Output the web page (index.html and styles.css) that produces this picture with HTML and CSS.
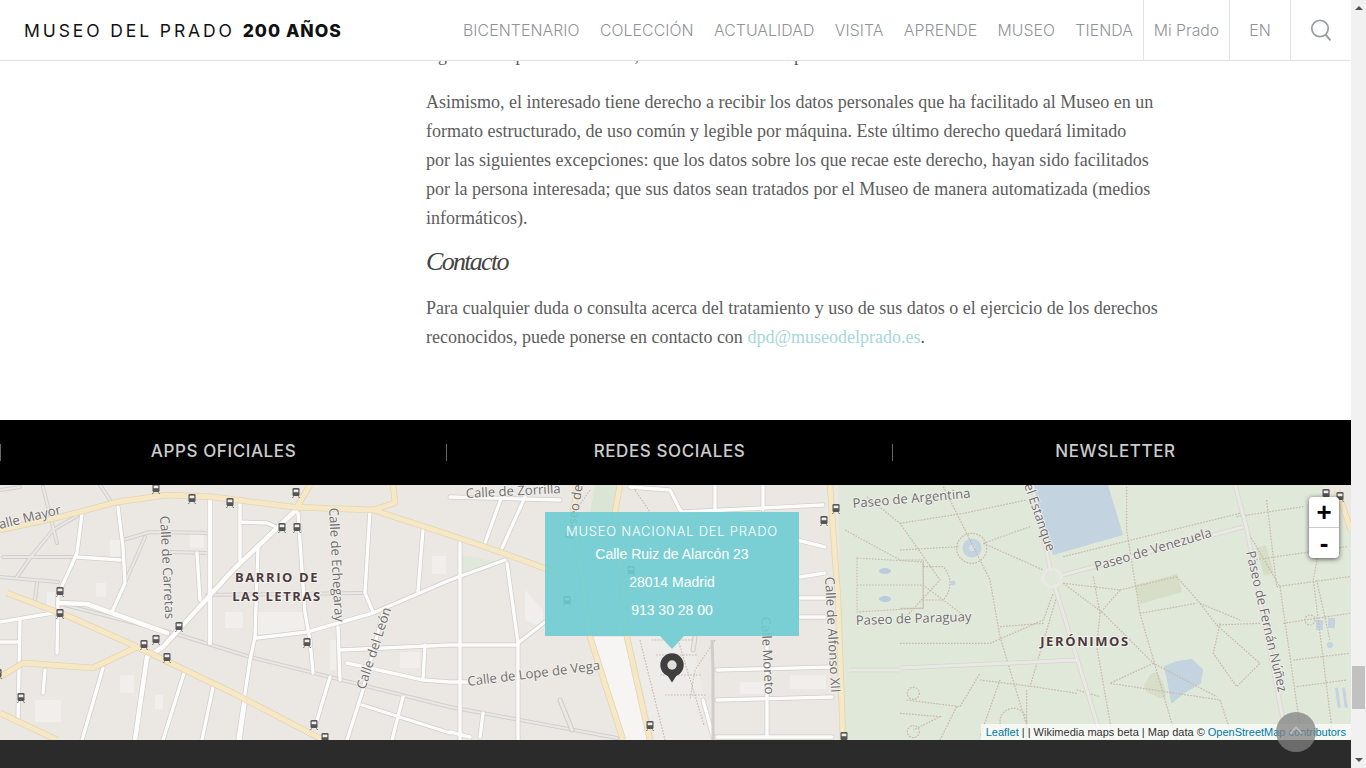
FILE: index.html
```html
<!DOCTYPE html>
<html lang="es">
<head>
    <meta charset="UTF-8">
    <meta name="viewport" content="width=device-width, initial-scale=1.0">
    <title>Museo del Prado - Privacidad</title>
    <link rel="stylesheet" href="styles.css">
</head>
<body>
    <div class="page">
        <header class="site-header">
            <a class="logo">MUSEO DEL PRADO <b>200 AÑOS</b></a>
            <nav class="main-nav">
                <a>BICENTENARIO</a>
                <a>COLECCIÓN</a>
                <a>ACTUALIDAD</a>
                <a>VISITA</a>
                <a>APRENDE</a>
                <a>MUSEO</a>
                <a>TIENDA</a>
            </nav>
            <a class="header-cell cell-user">Mi Prado</a>
            <a class="header-cell cell-lang">EN</a>
            <a class="header-cell cell-search">
                <svg width="22" height="22" viewBox="0 0 22 22" fill="none" stroke="#9a9ea3">
                    <circle cx="10" cy="9.5" r="8.2" stroke-width="1.7"/>
                    <path d="M15.5 15.5l5 5.8" stroke-width="2"/>
                </svg>
            </a>
        </header>

        <main class="legal">
            <p>signos de la persona del caso, dentro de la duda de personas interesadas.</p>
            <p>Asimismo, el interesado tiene derecho a recibir los datos personales que ha facilitado al Museo en un<br>
            formato estructurado, de uso común y legible por máquina. Este último derecho quedará limitado<br>
            por las siguientes excepciones: que los datos sobre los que recae este derecho, hayan sido facilitados<br>
            por la persona interesada; que sus datos sean tratados por el Museo de manera automatizada (medios<br>
            informáticos).</p>
            <h2>Contacto</h2>
            <p>Para cualquier duda o consulta acerca del tratamiento y uso de sus datos o el ejercicio de los derechos<br>
            reconocidos, puede ponerse en contacto con <a>dpd@museodelprado.es</a>.</p>
        </main>

        <section class="footer-tabs">
            <a>APPS OFICIALES</a>
            <a>REDES SOCIALES</a>
            <a>NEWSLETTER</a>
        </section>

        <section class="map">
            <svg class="map-tiles" width="1351" height="255" viewBox="0 485 1351 255">
                <defs>
                    <g id="tram">
                        <rect x="-3.5" y="-5" width="7" height="8" rx="1.2" fill="#555"/>
                        <rect x="-2.3" y="-3.4" width="4.6" height="2.6" fill="#eee"/>
                        <path d="M-2.5 3.5l-1 1.4M2.5 3.5l1 1.4" fill="none" stroke="#555"/>
                    </g>
                    <g id="lanes" fill="none" stroke-linejoin="round" stroke-linecap="round">
                        <path d="M43 487L57 543M3 557H77M17 577L30 558L53 530L82 513M0 577L58 582M37 583L35 600"/>
                        <path d="M123 540L150 532L210 533M145 537L113 610M170 552L207 553M207 595L363 593"/>
                        <path d="M57 603L173 633L250 657L450 707L617 738"/>
                        <path d="M0 490L20 487M100 485L110 500"/>
                    </g>
                    <g id="streets" fill="none" stroke-linejoin="round" stroke-linecap="round">
                        <path d="M82 513L77 553L58 595L57 653M118 507L123 547L125 583L112 612M77 557L120 560"/>
                        <path d="M240 503V560M240 522L267 523L283 530"/>
                        <path d="M298 513L305 613L310 640L313 673"/>
                        <path d="M258 547L255 637L250 660L238 740M197 553L200 600"/>
                        <path d="M257 638L307 632L373 613L450 580L505 560M370 510L365 593L373 612M423 530L418 592"/>
                        <path d="M338 627L340 680M340 650L450 645H518M425 645L423 680M347 663L423 680L450 682H468"/>
                        <path d="M383 613L363 690L347 740M330 677L315 727M362 705L450 733M403 697L392 740"/>
                        <path d="M185 670L163 740M213 687L202 740M245 703L240 740M103 668L82 740M20 620L18 720"/>
                        <path d="M0 622L53 613M0 642H18M45 670L43 693"/>
                        <path d="M503 493L485 543M525 497L502 548M507 563L518 643V740M460 540V740M518 643L545 622"/>
                        <path d="M450 497L560 500M483 713L480 737M450 732L470 737"/>
                        <path d="M630 487L670 490L680 510L683 512L823 505M715 485V512M763 485V510"/>
                        <path d="M797 540L825 547M800 577L825 573M800 598H825M800 617H825"/>
                        <path d="M717 670L832 667M717 700L832 697M717 737H832M767 637V737"/>
                        <path d="M703 700L713 737"/>
                    </g>
                    <g id="wide" fill="none" stroke-linejoin="round" stroke-linecap="round">
                        <path d="M58 603L87 604L167 633M210 500V643"/>
                        <path d="M298 508L233 570L163 647L147 657L135 740"/>
                    </g>
                    <g id="avenues" fill="none" stroke-linejoin="round">
                        <path d="M0 530L60 517L117 502L167 495L213 497L293 507L373 510L450 535L500 552L560 574"/>
                        <path d="M7 593L70 617L133 645L233 693L323 740"/>
                        <path d="M0 677L23 663L93 668L137 647"/>
                        <path d="M0 713L57 740"/>
                        <path d="M297 507L310 485M393 485L395 503L373 510"/>
                        <path d="M578 485L573 512L590 637L623 740"/>
                        <path d="M620 485L615 512L627 637L650 740"/>
                        <path d="M830 485L838 600L843 740"/>
                        <path d="M1337 490L1351 530"/>
                    </g>
                </defs>

                <rect x="0" y="485" width="1351" height="255" fill="#ebe8e4"/>

                <!-- manzanas -->
                <g fill="#f1efec">
                    <rect x="110" y="540" width="10" height="16"/>
                    <rect x="47" y="592" width="8" height="18"/>
                    <rect x="96" y="583" width="10" height="14"/>
                    <rect x="190" y="532" width="14" height="16"/>
                    <rect x="225" y="612" width="18" height="16"/>
                    <rect x="258" y="612" width="46" height="22"/>
                    <rect x="35" y="700" width="26" height="22"/>
                    <rect x="120" y="675" width="14" height="18"/>
                    <rect x="155" y="695" width="8" height="14"/>
                    <rect x="330" y="640" width="6" height="30"/>
                    <rect x="400" y="652" width="20" height="16"/>
                    <rect x="432" y="556" width="14" height="18"/>
                    <path d="M525 590l18 20v18l-18-8z"/>
                    <rect x="693" y="715" width="18" height="10"/>
                    <rect x="740" y="682" width="26" height="12"/>
                    <rect x="790" y="675" width="36" height="14"/>
                </g>
                <path d="M590 637H627L650 740H623Z" fill="#f6f5f3"/>
                <path d="M630 637H692L712 740H655Z" fill="#eeecE8"/>

                <!-- parque -->
                <path d="M838 485H1351V740H843Z" fill="#dfe8d9"/>
                <path d="M1322 485H1351V530Z" fill="#ebe8e4"/>
                <path d="M595 485H620L614 512H590Z" fill="#dbe5d5"/>
                <path d="M461 555L497 562L462 575Z" fill="#dfe8d9"/>

                <!-- agua -->
                <path d="M1033 485H1108L1123 535L1053 555Z" fill="#c3d3e0"/>
                <path d="M1165 667l12-5l15-2l10 10l-2 13l-17 10l-11 9l-4-22z" fill="#c3d3e0" stroke="#c3d3e0" stroke-width="2" stroke-linejoin="round"/>
                <circle cx="972" cy="548" r="9.5" fill="#c3d3e0"/>
                <circle cx="972" cy="548" r="3" fill="#d6e0e6"/>
                <ellipse cx="885" cy="571" rx="6" ry="3" fill="#b9cbdd"/>
                <ellipse cx="885" cy="599" rx="6" ry="3" fill="#b9cbdd"/>
                <g fill="#c3d3e0">
                    <circle cx="953" cy="583" r="2.5"/>
                    <rect x="1316" y="620" width="7" height="10"/>
                    <rect x="1328" y="618" width="7" height="10"/>
                    <circle cx="1330" cy="645" r="3"/>
                    <rect x="1335" y="688" width="3" height="20" transform="rotate(-8 1335 688)"/>
                    <rect x="1342" y="688" width="3" height="20" transform="rotate(-8 1342 688)"/>
                </g>
                <g fill="#d6dec8">
                    <path d="M1135 585l42-11l5 18l-42 12z"/>
                    <path d="M1150 675q8-6 10 2q6 12 6 20q-6 4-12-2q-10-2-10-10z"/>
                    <path d="M1266 545l-10 3l8 28l10-3z"/>
                </g>

                <!-- senderos del parque, en coordenadas del recorte x3 -->
                <g transform="translate(900 480) scale(.3333)" fill="none" stroke="#c8b8aa" stroke-width="3.6" stroke-dasharray="5 4">
                    <path d="M0 130L190 100L380 60M250 190L390 140M0 210L180 200M250 190L430 270"/>
                    <path d="M130 20L270 300L300 470L390 770M680 20V150L720 400L830 780"/>
                    <path d="M490 310L660 330L830 290M660 330L600 400L590 500L640 780M490 310L610 400L760 550L950 650"/>
                    <path d="M830 290L900 370L950 435L1080 550M720 400L890 370M960 430L940 520L1010 620L1080 550M1080 430L950 435"/>
                    <path d="M1040 150L1140 320L1170 530L1200 740M1130 320L1350 290M1150 430L1350 400M1180 540L1350 520M1190 620L1340 600"/>
                    <path d="M1010 110L1210 80M490 230L1020 100M900 370L1020 420"/>
                    <path d="M0 490L270 490L430 420L460 340M300 440L430 430M20 660L180 680L240 580"/>
                    <path d="M0 700L120 710L40 750M240 600L400 620L530 640M380 630V780M530 630L600 650M760 550L630 610L960 660L1000 780"/>
                    <path d="M0 240H70V385H0M70 260H130Q170 310 130 360H70"/>
                    <path d="M1290 30L1240 300L1300 780M1100 60L1130 320M1250 300L1290 480M-100 50L0 130L120 300L0 430"/>
                    <path d="M300 600L240 770M470 350L390 620M170 680L120 780M580 290L600 400M1060 240L1340 200"/>
                    <circle cx="40" cy="640" r="18"/>
                    <circle cx="40" cy="755" r="18"/>
                    <circle cx="340" cy="725" r="40"/>
                    <circle cx="215" cy="205" r="45"/>
                    <circle cx="1230" cy="420" r="15"/>
                </g>
                <g fill="none" stroke="#c8b8aa" stroke-width="1.1" stroke-dasharray="1.6 1.4">
                    <path d="M857 558L923 562V608L857 612ZM857 585H923M845 530L900 560M923 585L970 620"/>
                    <path d="M640 640L665 740M652 640H694M656 655H698M660 675H702M665 695H706M678 640L704 725M715 640L695 670L690 700"/>
                    <path d="M590 490L575 512M635 490L650 512"/>
                </g>

                <!-- calles -->
                <use href="#lanes" stroke="#d2d0cc" stroke-width="4"/>
                <use href="#lanes" stroke="#e9e8e6" stroke-width="2"/>
                <use href="#streets" stroke="#d0cecb" stroke-width="4.8"/>
                <use href="#wide" stroke="#d0cecb" stroke-width="6"/>
                <use href="#streets" stroke="#fcfcfb" stroke-width="3.4"/>
                <use href="#wide" stroke="#fcfcfb" stroke-width="4.6"/>
                <path d="M713 670V740M712 640L713 670" stroke="#cfcdc9" stroke-width="3" fill="none"/>
                <path d="M560 700l12 30M695 637l-2 13" stroke="#cfcdc9" stroke-width="5" fill="none" stroke-linecap="round"/>
                <path d="M560 700l12 30M695 637l-2 13" stroke="#ebe8e4" stroke-width="3" fill="none" stroke-linecap="round"/>

                <!-- avenidas -->
                <use href="#avenues" stroke="#e3d5b4" stroke-width="6.4"/>
                <use href="#avenues" stroke="#f6e8c4" stroke-width="4.8"/>

                <!-- paseos del parque -->
                <g fill="none" stroke="#d6d5cf" stroke-width="4.5" stroke-linejoin="round">
                    <path d="M1032 485L1052 577L1100 733M1063 575L1243 527M1235 485L1247 530L1283 720M900 668L1077 660M850 670H900"/>
                </g>
                <g fill="none" stroke="#e9e8e4" stroke-width="3.2" stroke-linejoin="round">
                    <path d="M1032 485L1052 577L1100 733M1063 575L1243 527M1235 485L1247 530L1283 720M900 668L1077 660M850 670H900"/>
                    <circle cx="1052" cy="578" r="9"/>
                </g>
                <circle cx="1052" cy="578" r="6.8" fill="#dfe8d9"/>

                <!-- paradas -->
                <g>
                    <use href="#tram" x="156" y="489"/>
                    <use href="#tram" x="192" y="499"/>
                    <use href="#tram" x="230" y="503"/>
                    <use href="#tram" x="296" y="493"/>
                    <use href="#tram" x="282" y="528"/>
                    <use href="#tram" x="297" y="528"/>
                    <use href="#tram" x="60" y="592"/>
                    <use href="#tram" x="60" y="614"/>
                    <use href="#tram" x="179" y="627"/>
                    <use href="#tram" x="156" y="640"/>
                    <use href="#tram" x="144" y="645"/>
                    <use href="#tram" x="167" y="658"/>
                    <use href="#tram" x="307" y="643"/>
                    <use href="#tram" x="21" y="698"/>
                    <use href="#tram" x="-2" y="674"/>
                    <use href="#tram" x="314" y="725"/>
                    <use href="#tram" x="325" y="738"/>
                    <use href="#tram" x="631" y="571"/>
                    <use href="#tram" x="567" y="601"/>
                    <use href="#tram" x="650" y="726"/>
                    <use href="#tram" x="824" y="521"/>
                    <use href="#tram" x="836" y="509"/>
                    <use href="#tram" x="844" y="737"/>
                    <use href="#tram" x="1326" y="494"/>
                    <use href="#tram" x="1340" y="497"/>
                </g>

                <!-- rotulos -->
                <g class="street">
                    <text transform="translate(0 529) rotate(-14)">alle Mayor</text>
                    <text transform="translate(466 498) rotate(-3)">Calle de Zorrilla</text>
                    <text transform="translate(160 516) rotate(87)">Calle de Carretas</text>
                    <text transform="translate(329 508) rotate(87)">Calle de Echegaray</text>
                    <text transform="translate(365 690) rotate(-72)">Calle del León</text>
                    <text transform="translate(468 686) rotate(-7)">Calle de Lope de Vega</text>
                    <text transform="translate(574 540) rotate(-81)">Paseo de</text>
                    <text transform="translate(825 577) rotate(87)">Calle de Alfonso XII</text>
                    <text transform="translate(761 617) rotate(87)">Calle Moreto</text>
                    <text transform="translate(853 508) rotate(-5)">Paseo de Argentina</text>
                    <text transform="translate(1024 485) rotate(71)">el Estanque</text>
                    <text transform="translate(1096 571) rotate(-16.5)">Paseo de Venezuela</text>
                    <text transform="translate(856 625) rotate(-2)">Paseo de Paraguay</text>
                    <text transform="translate(1246 552) rotate(77)">Paseo de Fernán Núñez</text>
                </g>
                <g class="district">
                    <text x="277" y="582" text-anchor="middle">BARRIO DE</text>
                    <text x="277" y="601" text-anchor="middle">LAS LETRAS</text>
                    <text x="1085" y="646" text-anchor="middle">JERÓNIMOS</text>
                </g>
            </svg>

            <div class="map-popup">
                <h3>MUSEO NACIONAL DEL PRADO</h3>
                <p>Calle Ruiz de Alarcón 23</p>
                <p>28014 Madrid</p>
                <p>913 30 28 00</p>
            </div>

            <svg class="map-pin" width="24" height="30" viewBox="0 0 24 30">
                <circle cx="12" cy="12" r="11.7" fill="#3f3f3f"/>
                <path d="M6.5 21L12 29.5L17.5 21Z" fill="#3f3f3f"/>
                <circle cx="12" cy="12" r="4.7" fill="#e0dfdb"/>
            </svg>

            <div class="zoom-control">
                <a>+</a>
                <a>-</a>
            </div>

            <div class="attribution"><a>Leaflet</a> | | Wikimedia maps beta | Map data © <a>OpenStreetMap contributors</a></div>
        </section>

        <footer class="site-footer"></footer>

        <a class="to-top">
            <svg width="14" height="8" viewBox="0 0 14 8" fill="none" stroke="#bdbdbd" stroke-width="1.6"><path d="M1 7.5L7 1.5l6 6"/></svg>
        </a>
    </div>

    <div class="scrollbar">
        <span class="arrow-up"></span>
        <span class="thumb"></span>
        <span class="arrow-down"></span>
    </div>
</body>
</html>
```

FILE: styles.css
```css
/* Base */
html, body { height: 100%; }
body {
    margin: 0;
    display: flex;
    height: 768px;
    overflow: hidden;
    background: #fff;
    font-family: "Liberation Serif", serif;
}

.page {
    position: relative;
    width: 1351px;
    height: 768px;
    overflow: hidden;
}

/* Cabecera */
.site-header {
    position: absolute;
    top: 0;
    left: 0;
    right: 0;
    z-index: 10;
    display: flex;
    align-items: stretch;
    height: 60px;
    background: #fff;
    border-bottom: 1px solid #e3e3e3;
    font-family: Inter, sans-serif;
    font-weight: 300;
    color: #8f9398;
    font-size: 15.8px;
}

.logo {
    margin-left: 24px;
    margin-right: auto;
    align-self: center;
    font-size: 17.5px;
    letter-spacing: 2.9px;
    color: #111;
    font-weight: 400;
    white-space: nowrap;
}
.logo b {
    font-weight: 800;
    letter-spacing: 1px;
}

.main-nav {
    display: flex;
    align-items: center;
    gap: 20.2px;
    margin-right: 10px;
    letter-spacing: 0.1px;
}

.header-cell {
    display: flex;
    align-items: center;
    justify-content: center;
    border-left: 1px solid #e3e3e3;
}
.cell-user { width: 85px; }
.cell-lang { width: 60px; }
.cell-search { width: 60px; }

/* Texto legal */
.legal {
    height: 352px;
    padding: 41px 0 27px 426px;
    color: #5c5c5c;
    font-size: 18px;
    line-height: 29px;
    white-space: nowrap;
}
.legal p { margin: 0 0 18px; }
.legal h2 {
    margin: -1px 0 20px;
    font-size: 26px;
    line-height: 24px;
    letter-spacing: -1.7px;
    font-weight: 400;
    font-style: italic;
    color: #444;
}
.legal a { color: #a5d8dc; }

/* Franja negra */
.footer-tabs {
    display: flex;
    height: 65px;
    align-items: center;
    background: #000;
    font-family: Inter, sans-serif;
    font-size: 17px;
    font-weight: 500;
    letter-spacing: 0.6px;
    color: #ccc;
}
.footer-tabs a {
    width: 445px;
    border-left: 1px solid #666;
    height: 17px;
    line-height: 15px;
    text-align: center;
}

/* Mapa */
.map {
    position: relative;
    height: 255px;
    overflow: hidden;
}
.map-tiles { display: block; }

.street text {
    font-family: "Open Sans", sans-serif;
    font-size: 13.1px;
    fill: #6e6c6a;
    stroke: #f4f3f0;
    stroke-width: 1.5px;
    paint-order: stroke;
}
.district text {
    font-family: "Open Sans", sans-serif;
    font-size: 13px;
    font-weight: 700;
    letter-spacing: 1.6px;
    fill: #4d3a3c;
    stroke: #f4f3f0;
    stroke-width: 2px;
    paint-order: stroke;
}

.map-popup {
    position: absolute;
    left: 545px;
    top: 27px;
    width: 254px;
    height: 124px;
    box-sizing: border-box;
    padding-top: 11px;
    background: rgba(110, 204, 210, 0.9);
    color: #fff;
    text-align: center;
    font-family: "Liberation Sans", sans-serif;
    font-size: 14px;
}
.map-popup::after {
    content: '';
    position: absolute;
    left: 115px;
    top: 124px;
    border-left: 12.5px solid transparent;
    border-right: 12.5px solid transparent;
    border-top: 13px solid rgba(110, 204, 210, 0.9);
}
.map-popup h3 {
    margin: 0 0 1px;
    font-family: Inter, sans-serif;
    font-size: 13px;
    font-weight: 300;
    line-height: 16px;
    letter-spacing: 0.75px;
}
.map-popup p {
    margin: 0;
    height: 28px;
    line-height: 28px;
}

.map-pin {
    position: absolute;
    left: 660px;
    top: 168px;
}

.zoom-control {
    position: absolute;
    left: 1309px;
    top: 12px;
    width: 30px;
    background: #fff;
    border-radius: 4px;
    box-shadow: 0 1px 5px rgba(0, 0, 0, 0.65);
    font-family: "Liberation Sans", sans-serif;
    font-weight: 700;
    font-size: 26px;
    color: #000;
    text-align: center;
}
.zoom-control a {
    display: block;
    height: 30px;
    line-height: 30px;
}
.zoom-control a + a { border-top: 1px solid #ccc; }

.attribution {
    position: absolute;
    right: 0;
    bottom: 0;
    height: 16px;
    line-height: 16px;
    padding: 0 5px;
    background: rgba(255, 255, 255, 0.7);
    font-family: "Liberation Sans", sans-serif;
    font-size: 11px;
    color: #333;
}
.attribution a { color: #0078a8; }

/* Pie */
.site-footer {
    height: 28px;
    background: #2b2b2b;
}

.to-top {
    position: absolute;
    left: 1276px;
    top: 712px;
    width: 40px;
    height: 40px;
    border-radius: 50%;
    background: rgba(130, 130, 130, 0.75);
    display: flex;
    align-items: center;
    justify-content: center;
    padding-bottom: 4px;
    box-sizing: border-box;
}

/* Barra de scroll */
.scrollbar {
    position: relative;
    width: 15px;
    height: 768px;
    background: #f1f1f1;
}
.thumb {
    position: absolute;
    left: 1px;
    top: 666px;
    width: 13px;
    height: 43px;
    background: #c1c1c1;
}
.arrow-up, .arrow-down {
    position: absolute;
    left: 4px;
    border-left: 4px solid transparent;
    border-right: 4px solid transparent;
}
.arrow-up { top: 6px; border-bottom: 4px solid #505050; }
.arrow-down { bottom: 6px; border-top: 4px solid #505050; }
```
